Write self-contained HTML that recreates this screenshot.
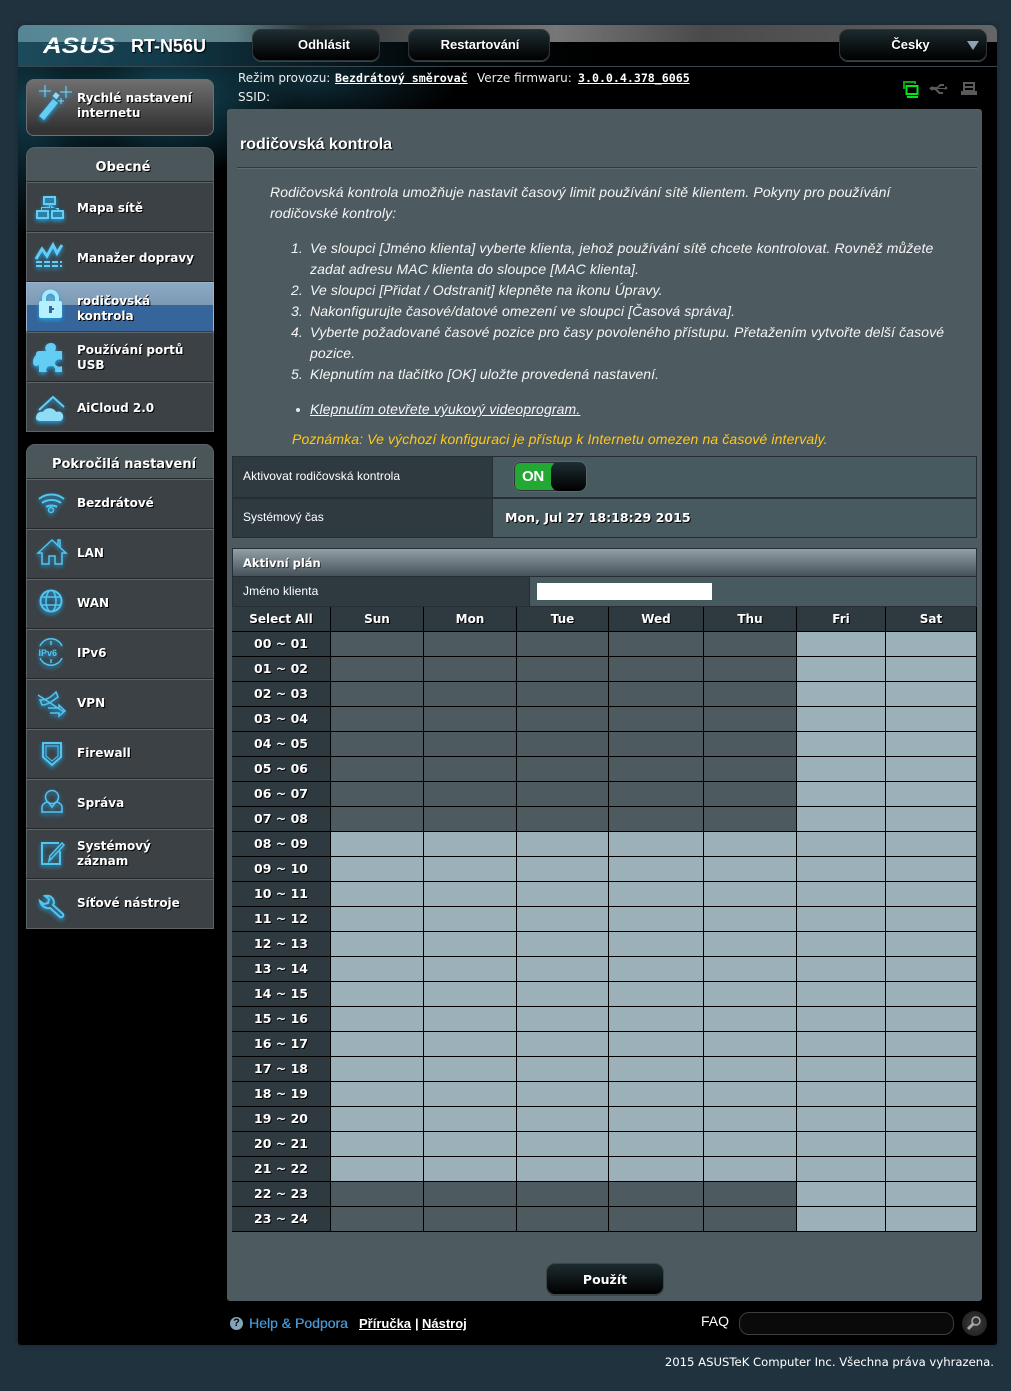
<!DOCTYPE html>
<html><head><meta charset="utf-8"><title>RT-N56U</title>
<style>
*{box-sizing:border-box}
html,body{margin:0;padding:0;width:1011px;height:1391px;overflow:hidden;background:#21323f}
body{position:relative;font-family:"Liberation Sans",sans-serif;color:#fff}
.a{position:absolute;white-space:nowrap}
#wrap{left:18px;top:25px;width:979px;height:1320px;background:#000;border-radius:7px 7px 3px 3px;box-shadow:0 0 5px #16232c;overflow:hidden}
#t1{left:0;top:0;width:979px;height:17px;background:linear-gradient(90deg,#558594 0,#659099 15%,#5f8288 22%,#2c3336 30%,#5c5c5c 45%,#777 55%,#4a4a4a 70%,#555 85%,#666 100%)}
#t2{left:0;top:17px;width:979px;height:24px;background:linear-gradient(90deg,#1d4b5c 0,#123a4a 15%,#0b2630 24%,#030a0d 40%,#000 60%)}
#ln{left:0;top:41px;width:979px;height:1px;background:#3a474e}
#sm{left:0;top:42px;width:520px;height:300px;background:radial-gradient(ellipse 125px 80px at 150px 30px,#14485a 0,rgba(16,60,75,.6) 55%,transparent 100%),radial-gradient(ellipse 90px 130px at 10px 40px,#113c4b 0,transparent 100%),radial-gradient(ellipse 150px 50px at 290px 15px,#0e2b36 0,transparent 100%)}
.btn{border-radius:9px;background:linear-gradient(#1f2e33,#000);border:1px solid #2c3539;font-weight:bold;font-size:13px;text-align:center;box-shadow:0 1px 0 #39444a;color:#fff;text-shadow:1px 1px 0 #000}
.side{font-family:"DejaVu Sans",sans-serif;font-weight:bold;font-size:12px;line-height:15px;text-shadow:1px 1px 0 #000;color:#fff}
.a.side{margin-top:1px}
.it{position:absolute;left:26px;width:188px;height:50px;background:#3b4145;border:1px solid #5f6466;border-bottom-color:#25282a}
.it.e{border-bottom-color:#5f6466}
.it.s{background:linear-gradient(#8ca8c4,#7d9ab4 22px,#35659a 22px,#35659a);border-color:#9db3c8 #9db3c8 #23405f}
.hd{position:absolute;left:26px;width:188px;background:#4b565b;border:1px solid #5b6366;border-bottom:1px solid #24292c;border-radius:9px 9px 0 0;text-align:center;font-size:13px;padding-left:8px}
#p{left:227px;top:109px;width:755px;height:1192px;background:#4d5a5f;border-radius:3px}
.l{position:absolute;left:270px;line-height:21px;font-size:14px;letter-spacing:.125px;font-style:italic;color:#f6f6f6;white-space:nowrap}
.k{font-size:12px;color:#fff}
table{position:absolute;left:232px;top:607px;width:745px;border-collapse:separate;border-spacing:0;table-layout:fixed}
td,th{height:25px;padding:0;border-right:1px solid #000;border-bottom:1px solid #000;background:#4d5a5f}
th{background:#2f3a40;font-family:"DejaVu Sans",sans-serif;font-size:12px;font-weight:bold;color:#fff;text-shadow:1px 1px 0 #000;text-align:center}
tr.o th,tr.b th{font-size:12.5px;padding-bottom:2px}
tr.o td:nth-child(n+7),tr.b td{background:#9bb0b8}
.fr{filter:drop-shadow(0 2px 2px #1f9fe0)}
</style></head><body>
<div class="a" id="wrap">
<div class="a" id="t1"></div><div class="a" id="t2"></div><div class="a" id="ln"></div><div class="a" id="sm"></div>
</div>

<svg class="a" style="left:43px;top:32px" width="75" height="26" viewBox="0 0 75 26"><text x="0" y="21" textLength="72" lengthAdjust="spacingAndGlyphs" font-family="Liberation Sans" font-weight="bold" font-style="italic" font-size="22" fill="#fff">ASUS</text><rect x="0" y="12" width="75" height="1" fill="#2a5768"/></svg>
<div class="a" style="left:131px;top:36px;font-size:18px;font-weight:bold;line-height:21px;text-shadow:1px 1px 1px #000">RT-N56U</div>

<div class="a btn" style="left:252px;top:29px;width:128px;height:32px;line-height:29px;padding-left:16px">Odhlásit</div>
<div class="a btn" style="left:408px;top:29px;width:142px;height:32px;line-height:29px;padding-left:2px">Restartování</div>
<div class="a btn" style="left:839px;top:29px;width:148px;height:32px;line-height:29px;padding-right:5px;background:linear-gradient(#1c2a2e,#000)">Česky</div>
<div class="a" style="left:967px;top:41px;width:0;height:0;border:6px solid transparent;border-top:9px solid #8ea3b6;border-bottom:0"></div>

<div class="a" style="left:238px;top:71px;font:12px/15px 'DejaVu Sans',sans-serif;color:#eee">Režim provozu:</div>
<div class="a" style="left:335px;top:71px;font:bold 11.6px/15px 'DejaVu Sans Mono',monospace;text-decoration:underline">Bezdrátový směrovač</div>
<div class="a" style="left:477px;top:71px;font:12px/15px 'DejaVu Sans',sans-serif;color:#eee">Verze firmwaru:</div>
<div class="a" style="left:578px;top:71px;font:bold 11.6px/15px 'DejaVu Sans Mono',monospace;text-decoration:underline">3.0.0.4.378_6065</div>
<div class="a" style="left:238px;top:90px;font:12px/15px 'DejaVu Sans',sans-serif;color:#eee">SSID:</div>

<!-- sidebar -->
<div class="a" style="left:26px;top:79px;width:188px;height:57px;border-radius:8px;border:1px solid #6d7072;background:linear-gradient(#6f6f6f,#333 90%)"></div>
<div class="a side" style="left:77px;top:90px">Rychlé nastavení<br>internetu</div>

<div class="hd side" style="top:147px;height:35px;line-height:39px;font-size:13px;padding-left:6px">Obecné</div>
<div class="it" style="top:182px"></div>
<div class="it" style="top:232px"></div>
<div class="it s" style="top:282px"></div>
<div class="it" style="top:332px"></div>
<div class="it e" style="top:382px"></div>
<div class="a side" style="left:77px;top:200px">Mapa sítě</div>
<div class="a side" style="left:77px;top:250px">Manažer dopravy</div>
<div class="a side" style="left:77px;top:293px">rodičovská<br>kontrola</div>
<div class="a side" style="left:77px;top:342px">Používání portů<br>USB</div>
<div class="a side" style="left:77px;top:400px">AiCloud 2.0</div>

<div class="hd side" style="top:444px;height:35px;line-height:39px;font-size:13px">Pokročilá nastavení</div>
<div class="it" style="top:479px"></div>
<div class="it" style="top:529px"></div>
<div class="it" style="top:579px"></div>
<div class="it" style="top:629px"></div>
<div class="it" style="top:679px"></div>
<div class="it" style="top:729px"></div>
<div class="it" style="top:779px"></div>
<div class="it" style="top:829px"></div>
<div class="it e" style="top:879px"></div>
<div class="a side" style="left:77px;top:495px">Bezdrátové</div>
<div class="a side" style="left:77px;top:545px">LAN</div>
<div class="a side" style="left:77px;top:595px">WAN</div>
<div class="a side" style="left:77px;top:645px">IPv6</div>
<div class="a side" style="left:77px;top:695px">VPN</div>
<div class="a side" style="left:77px;top:745px">Firewall</div>
<div class="a side" style="left:77px;top:795px">Správa</div>
<div class="a side" style="left:77px;top:838px">Systémový<br>záznam</div>
<div class="a side" style="left:77px;top:895px">Síťové nástroje</div>

<!-- panel -->
<div class="a" id="p"></div>
<div class="a" style="left:240px;top:134px;font-size:16px;font-weight:bold;line-height:21px;text-shadow:1px 1px 1px #000">rodičovská kontrola</div>
<div class="a" style="left:237px;top:167px;width:740px;height:2px;background:linear-gradient(#2f3a3f 50%,#5f6b70 50%)"></div>

<div class="l" style="top:182px">Rodičovská kontrola umožňuje nastavit časový limit používání sítě klientem. Pokyny pro používání</div>
<div class="l" style="top:203px">rodičovské kontroly:</div>
<div class="l" style="top:238px;left:291px">1.</div><div class="l" style="top:238px;left:310px">Ve sloupci [Jméno klienta] vyberte klienta, jehož používání sítě chcete kontrolovat. Rovněž můžete</div>
<div class="l" style="top:259px;left:310px">zadat adresu MAC klienta do sloupce [MAC klienta].</div>
<div class="l" style="top:280px;left:291px">2.</div><div class="l" style="top:280px;left:310px">Ve sloupci [Přidat / Odstranit] klepněte na ikonu Úpravy.</div>
<div class="l" style="top:301px;left:291px">3.</div><div class="l" style="top:301px;left:310px">Nakonfigurujte časové/datové omezení ve sloupci [Časová správa].</div>
<div class="l" style="top:322px;left:291px">4.</div><div class="l" style="top:322px;left:310px">Vyberte požadované časové pozice pro časy povoleného přístupu. Přetažením vytvořte delší časové</div>
<div class="l" style="top:343px;left:310px">pozice.</div>
<div class="l" style="top:364px;left:291px">5.</div><div class="l" style="top:364px;left:310px">Klepnutím na tlačítko [OK] uložte provedená nastavení.</div>
<div class="a" style="left:296px;top:408px;width:4px;height:4px;border-radius:50%;background:#e6e6e6"></div>
<div class="l" style="top:399px;left:310px;text-decoration:underline">Klepnutím otevřete výukový videoprogram.</div>
<div class="l" style="top:429px;left:292px;color:#ffc81e">Poznámka: Ve výchozí konfiguraci je přístup k Internetu omezen na časové intervaly.</div>

<!-- settings table -->
<div class="a" style="left:232px;top:456px;width:745px;height:82px;background:#262e33"></div>
<div class="a" style="left:233px;top:457px;width:259px;height:40px;background:#2f3a40"></div>
<div class="a" style="left:493px;top:457px;width:483px;height:40px;background:#475a60"></div>
<div class="a" style="left:233px;top:499px;width:259px;height:38px;background:#2f3a40"></div>
<div class="a" style="left:493px;top:499px;width:483px;height:38px;background:#475a60"></div>
<div class="a k" style="left:243px;top:468px;line-height:16px;letter-spacing:.06px">Aktivovat rodičovská kontrola</div>
<div class="a k" style="left:243px;top:509px;line-height:16px">Systémový čas</div>
<div class="a" style="left:513px;top:461px;width:74px;height:31px;border-radius:8px;background:#2c3439;border:1px solid #5b666b"></div>
<div class="a" style="left:515px;top:463px;width:42px;height:27px;border-radius:5px;background:#24a834;font-size:15px;font-weight:bold;line-height:28px;padding-left:7px;letter-spacing:-.3px">ON</div>
<div class="a" style="left:551px;top:462px;width:35px;height:29px;border-radius:8px;background:linear-gradient(#1e2e33,#000)"></div>
<div class="a" style="left:505px;top:510px;font:bold 12.6px/16px 'DejaVu Sans',sans-serif;text-shadow:1px 1px 0 #000">Mon, Jul 27 18:18:29 2015</div>

<div class="a" style="left:232px;top:548px;width:745px;height:59px;background:#262e33"></div>
<div class="a" style="left:233px;top:549px;width:743px;height:27px;background:linear-gradient(#929fa5,#46535b)"></div>
<div class="a" style="left:243px;top:555px;font:bold 11.5px/16px 'DejaVu Sans',sans-serif;text-shadow:1px 1px 0 #333">Aktivní plán</div>
<div class="a" style="left:233px;top:577px;width:296px;height:29px;background:#2f3a40"></div>
<div class="a" style="left:530px;top:577px;width:446px;height:29px;background:#475a60"></div>
<div class="a k" style="left:243px;top:583px;line-height:16px;letter-spacing:.1px">Jméno klienta</div>
<div class="a" style="left:537px;top:583px;width:175px;height:17px;background:#fff"></div>

<table>
<colgroup><col style="width:99px"><col style="width:93px"><col style="width:93px"><col style="width:92px"><col style="width:95px"><col style="width:93px"><col style="width:89px"><col style="width:91px"></colgroup>
<tr><th>Select All</th><th>Sun</th><th>Mon</th><th>Tue</th><th>Wed</th><th>Thu</th><th>Fri</th><th>Sat</th></tr>
<tr class="o"><th>00 ~ 01</th><td></td><td></td><td></td><td></td><td></td><td></td><td></td></tr>
<tr class="o"><th>01 ~ 02</th><td></td><td></td><td></td><td></td><td></td><td></td><td></td></tr>
<tr class="o"><th>02 ~ 03</th><td></td><td></td><td></td><td></td><td></td><td></td><td></td></tr>
<tr class="o"><th>03 ~ 04</th><td></td><td></td><td></td><td></td><td></td><td></td><td></td></tr>
<tr class="o"><th>04 ~ 05</th><td></td><td></td><td></td><td></td><td></td><td></td><td></td></tr>
<tr class="o"><th>05 ~ 06</th><td></td><td></td><td></td><td></td><td></td><td></td><td></td></tr>
<tr class="o"><th>06 ~ 07</th><td></td><td></td><td></td><td></td><td></td><td></td><td></td></tr>
<tr class="o"><th>07 ~ 08</th><td></td><td></td><td></td><td></td><td></td><td></td><td></td></tr>
<tr class="b"><th>08 ~ 09</th><td></td><td></td><td></td><td></td><td></td><td></td><td></td></tr>
<tr class="b"><th>09 ~ 10</th><td></td><td></td><td></td><td></td><td></td><td></td><td></td></tr>
<tr class="b"><th>10 ~ 11</th><td></td><td></td><td></td><td></td><td></td><td></td><td></td></tr>
<tr class="b"><th>11 ~ 12</th><td></td><td></td><td></td><td></td><td></td><td></td><td></td></tr>
<tr class="b"><th>12 ~ 13</th><td></td><td></td><td></td><td></td><td></td><td></td><td></td></tr>
<tr class="b"><th>13 ~ 14</th><td></td><td></td><td></td><td></td><td></td><td></td><td></td></tr>
<tr class="b"><th>14 ~ 15</th><td></td><td></td><td></td><td></td><td></td><td></td><td></td></tr>
<tr class="b"><th>15 ~ 16</th><td></td><td></td><td></td><td></td><td></td><td></td><td></td></tr>
<tr class="b"><th>16 ~ 17</th><td></td><td></td><td></td><td></td><td></td><td></td><td></td></tr>
<tr class="b"><th>17 ~ 18</th><td></td><td></td><td></td><td></td><td></td><td></td><td></td></tr>
<tr class="b"><th>18 ~ 19</th><td></td><td></td><td></td><td></td><td></td><td></td><td></td></tr>
<tr class="b"><th>19 ~ 20</th><td></td><td></td><td></td><td></td><td></td><td></td><td></td></tr>
<tr class="b"><th>20 ~ 21</th><td></td><td></td><td></td><td></td><td></td><td></td><td></td></tr>
<tr class="b"><th>21 ~ 22</th><td></td><td></td><td></td><td></td><td></td><td></td><td></td></tr>
<tr class="o"><th>22 ~ 23</th><td></td><td></td><td></td><td></td><td></td><td></td><td></td></tr>
<tr class="o"><th>23 ~ 24</th><td></td><td></td><td></td><td></td><td></td><td></td><td></td></tr>
</table>

<div class="a btn" style="left:546px;top:1263px;width:118px;height:32px;line-height:30px;padding-top:1px;font-family:'DejaVu Sans',sans-serif;font-size:12.5px;border-color:#3b4549;background:linear-gradient(#1d2c30,#000)">Použít</div>

<!-- footer -->
<div class="a" style="left:230px;top:1317px;width:13px;height:13px;border-radius:50%;background:#84a5b5;color:#000;font:bold 11px/13px 'Liberation Sans',sans-serif;text-align:center">?</div>
<div class="a" style="left:249px;top:1315px;font-size:14px;line-height:17px;color:#4796d3;text-shadow:.3px 0 0 #4796d3">Help &amp; Podpora</div>
<div class="a" style="left:359px;top:1315px;font-size:13px;font-weight:bold;line-height:17px"><u>Příručka</u></div>
<div class="a" style="left:415px;top:1315px;font-size:13px;font-weight:bold;line-height:17px">|</div>
<div class="a" style="left:422px;top:1315px;font-size:13px;font-weight:bold;line-height:17px"><u>Nástroj</u></div>
<div class="a" style="left:701px;top:1313px;font-size:14px;line-height:17px">FAQ</div>
<div class="a" style="left:739px;top:1312px;width:215px;height:23px;border-radius:10px;background:#0a0a0a;border:1px solid #3d3d3d"></div>
<div class="a" style="left:962px;top:1311px;width:25px;height:25px;border-radius:50%;background:radial-gradient(#3c3c3c,#1b1b1b)"></div>
<div class="a" style="right:17px;top:1355px;font:11.65px/14px 'DejaVu Sans',sans-serif;color:#fff">2015 ASUSTeK Computer Inc. Všechna práva vyhrazena.</div>

<!-- icons -->
<svg class="a" style="left:0;top:0" width="1011" height="1391" viewBox="0 0 1011 1391">
<g class="fr">
<path d="M39 116l14-17 5 4-14 17z" fill="#63cdf3"/><rect x="54" y="93" width="5" height="5" transform="rotate(40 56 95)" fill="#8fdcf6"/>
<path d="M45 85v12M39 91h12M66 86v12M60 92h12M61 98v6M58 101h6" stroke="#7fd6f5" stroke-width="1" fill="none"/>
</g>
<g fill="#63cdf3" class="fr">
<path d="M43 196h13v9h-13zM36 210h13v9h-13zM51 210h13v9h-13z"/>
<path d="M49 205h1v3h-8v2h-1v-3h8zM50 205h1v3h8v2h-1z" />
</g>
<g fill="#2d7fa5"><rect x="45" y="198" width="9" height="5"/><rect x="38" y="212" width="9" height="5"/><rect x="53" y="212" width="9" height="5"/></g>
<g class="fr" fill="none" stroke="#63cdf3" stroke-width="2">
<path d="M36 259l6-10 5 7 6-11 4 8 5-8" stroke-width="3"/>
<path d="M36 262h26M36 266h26" stroke-dasharray="6 2"/>
</g>
<g class="fr"><path d="M44 303v-5a6.500 6.500 0 0 1 13 0v5" fill="none" stroke="#a6eaff" stroke-width="4"/><rect x="39" y="301" width="23" height="17" rx="2" fill="#b5f0ff"/><path d="M49 306h3v2h2v2h-2v3h-3z" fill="#35659a"/></g>
<g class="fr" fill="#63cdf3"><path d="M36 354c0-2 2-3 3-3h7c-2-4 0-8 5-8s6 4 4 8h7v9c-4-2-7 1-7 3s3 5 7 3v6h-7c1-4-1-6-4-6s-6 2-4 6h-8v-7c-3 2-6 1-6-3 0-4 2-6 3-7z"/></g>
<g class="fr"><path d="M39 410l14-13 11 10" fill="none" stroke="#63cdf3" stroke-width="2"/><path d="M36 418c0-5 4-7 7-6 2-5 11-5 13 0 5-2 8 2 7 6-1 3-3 3-5 3H41c-3 0-5-1-5-3z" fill="#8fdcf6"/></g>

<g class="fr" fill="none" stroke="#53c5ee" stroke-width="1.500">
<path d="M39 499c7-6 18-6 25 0M42 503c5-4 14-4 19 0M46 507c3-2 8-2 11 0" stroke-width="2"/><circle cx="51" cy="510" r="2.500"/>
<path d="M38 553l14-13 14 13h-4v11H55v-8h-6v8H42V553z"/><path d="M58 545v-5h2v7" stroke-width="1.500"/>
<circle cx="51" cy="601" r="10.500" stroke-width="2"/><ellipse cx="51" cy="601" rx="5" ry="10.500"/><path d="M41 597h20M41 605h20"/>
<path d="M40 646a12 12 0 0 1 22 0M40 658a12 12 0 0 0 22 0M51 641v4M51 659v4"/>
<path d="M38 695l26 17M40 700c8 0 12-4 16-8l2 5c-6 4-10 8-16 8zM48 708h11v-3l6 6-6 5v-3H50"/>
<path d="M43 743h18v14l-9 8-9-8z" stroke-width="2"/><path d="M46 746h12v10l-6 5-6-5z" stroke-width="1"/>
<circle cx="52" cy="797" r="6.500"/><path d="M42 812v-5c0-3 4-5 6-5l4 5 4-5c2 0 6 2 6 5v5z"/>
<path d="M59 843H42v21h18V851" stroke-width="2"/><path d="M64 845l-12 13-3 3 1-5 12-13z"/>
<path d="M53 905l10 9c1 2-1 4-3 3l-10-9c-4 1-9-2-10-7l4 3 4-1 1-4-4-3c5-1 9 2 9 7z" stroke-width="2"/>
</g>
<text x="38.500" y="656" font-family="Liberation Sans" font-size="9" fill="#53c5ee" font-weight="bold" class="fr">IPv6</text>

<g fill="none" stroke="#00e51c" stroke-width="2"><path d="M904 89v-7h11v2" stroke="#08a612"/><rect x="906.500" y="86" width="11" height="8"/><path d="M907 97h11"/></g>
<g fill="#5a5a5a"><path d="M929 88l4-2v1h4l3-3h4v2h-3l-3 2h7v-2l3 2-3 2v-1h-8l3 3h3v2h-4l-4-4h-3v1z"/><path d="M963 82h12v9h2v4h-16v-4h2zm2 2v2h8v-2zm0 4v2h8v-2z" fill-rule="evenodd"/></g>
<g fill="none" stroke="#aaa" stroke-width="1.500"><circle cx="976" cy="1321" r="4"/><path d="M973 1324l-5 5" stroke-width="3"/></g>
</svg>
</body></html>
